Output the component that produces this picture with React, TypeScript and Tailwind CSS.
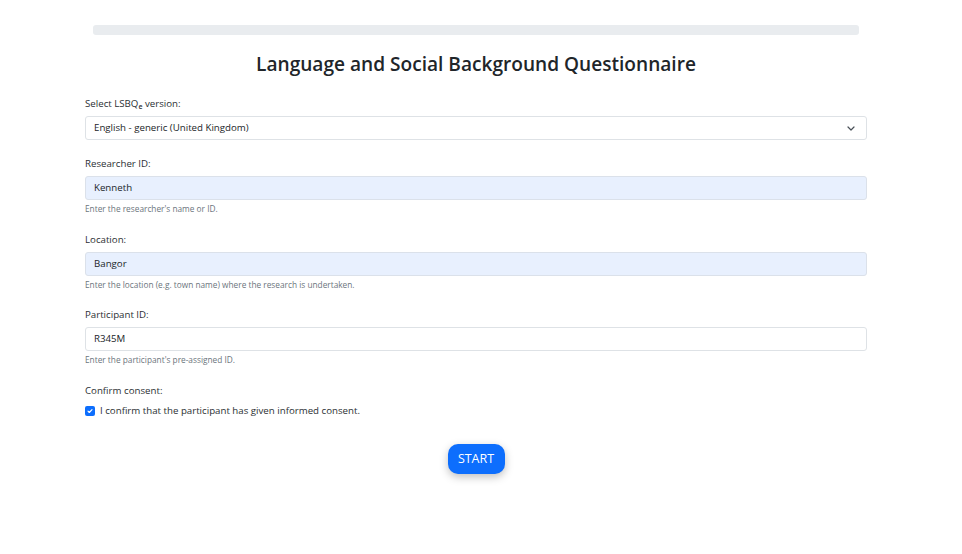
import React from "react";

const font = { fontFamily: '"Open Sans", "Noto Sans", sans-serif' };

function Label({ children, top }: { children: React.ReactNode; top: string }) {
  return <div className={`${top} h-[14px] leading-[14px] text-[9.7px] text-[#2b2f33]`}>{children}</div>;
}

function Input({ value, filled }: { value: string; filled?: boolean }) {
  return (
    <div
      className={`mt-[5px] h-[24px] w-full rounded-[3px] border px-[8px] flex items-center text-[9.7px] text-[#212529] ${
        filled ? "bg-[#e8f0fe] border-[#dbe1ea]" : "bg-white border-[#dee2e6]"
      }`}
    >
      {value}
    </div>
  );
}

function Help({ children }: { children: React.ReactNode }) {
  return <div className="mt-[3px] h-[12px] leading-[12px] text-[8.3px] text-[#6c757d]">{children}</div>;
}

export default function App() {
  return (
    <div className="w-[962px] h-[554px] bg-white overflow-hidden" style={font}>
      <div className="ml-[85px] w-[782px]">
        <div className="mt-[25px] mx-[8px] h-[10px] rounded-[3px] bg-[#e9ecef]" />
        <h1 className="mt-[17px] h-[24px] leading-[24px] text-center text-[19.1px] font-semibold text-[#212529]">
          Language and Social Background Questionnaire
        </h1>
        <Label top="mt-[21px]">
          Select LSBQ<sub className="text-[7px] font-semibold">e</sub> version:
        </Label>
        <div className="mt-[5px] h-[24px] w-full rounded-[3px] border border-[#dee2e6] bg-white px-[8px] flex items-center justify-between text-[9.7px] text-[#212529]">
          <span>English - generic (United Kingdom)</span>
          <svg width="8" height="5" viewBox="0 0 16 10" className="mr-[3px]">
            <path d="M2 2l6 6 6-6" fill="none" stroke="#495057" strokeWidth="2.4" strokeLinecap="round" strokeLinejoin="round" />
          </svg>
        </div>
        <Label top="mt-[17px]">Researcher ID:</Label>
        <Input value="Kenneth" filled />
        <Help>Enter the researcher's name or ID.</Help>
        <Label top="mt-[18px]">Location:</Label>
        <Input value="Bangor" filled />
        <Help>Enter the location (e.g. town name) where the research is undertaken.</Help>
        <Label top="mt-[17px]">Participant ID:</Label>
        <Input value="R345M" />
        <Help>Enter the participant's pre-assigned ID.</Help>
        <Label top="mt-[18px]">Confirm consent:</Label>
        <div className="mt-[6px] h-[14px] flex items-center gap-[5px] text-[9.7px] text-[#2b2f33]">
          <span className="w-[10px] h-[10px] rounded-[2px] bg-[#0d6efd] flex items-center justify-center">
            <svg width="8" height="8" viewBox="0 0 20 20">
              <path d="M5 10.5l3.2 3.2L15 6.5" fill="none" stroke="#fff" strokeWidth="3" strokeLinecap="round" strokeLinejoin="round" />
            </svg>
          </span>
          <span>I confirm that the participant has given informed consent.</span>
        </div>
        <div className="mt-[26px] flex justify-center">
          <button className="h-[30px] w-[57px] rounded-[10px] bg-[#0d6efd] text-white text-[12.5px] shadow-[0_3px_8px_rgba(0,0,0,0.25)]">
            START
          </button>
        </div>
      </div>
    </div>
  );
}
